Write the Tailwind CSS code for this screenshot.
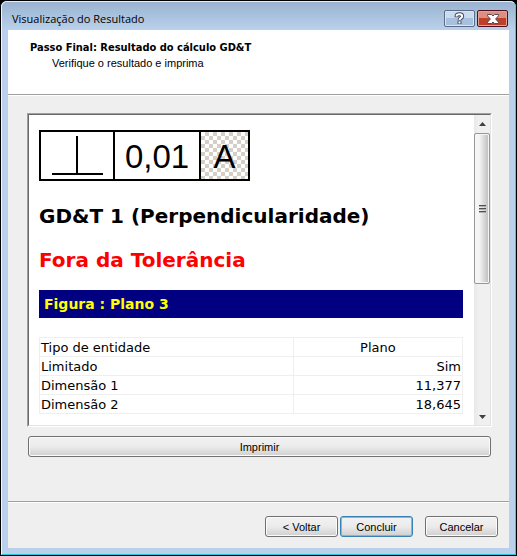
<!DOCTYPE html>
<html lang="pt-BR">
<head>
    <meta charset="UTF-8" />
    <meta name="viewport" content="width=device-width, initial-scale=1.0" />
    <title>Visualização do Resultado</title>
    <script src="https://cdn.jsdelivr.net/npm/@tailwindcss/browser@4"></script>
</head>
<body class="bg-black font-['Tahoma','Liberation_Sans',sans-serif] text-[11px] leading-[14px] text-black">

<!-- Moldura da janela -->
<div class="flex min-h-screen flex-col rounded-t-[7px] border border-black bg-[#b9d1ea]">
    <div class="flex flex-1 flex-col rounded-t-[6px] border-t border-r border-b border-l border-t-[#e4eef8] border-r-[#34cbe8] border-b-[#28c5dd] border-l-[#f2f7fc]">

        <!-- Barra de título -->
        <header class="flex h-7 items-center justify-between rounded-t-[5px] bg-linear-to-b from-[#9ab3d1] to-[#b9d1ea] pr-[7px] pl-[10px]">
            <h1 class="pt-[5px] font-['Segoe_UI','Open_Sans',sans-serif] text-[11px]">Visualização do Resultado</h1>
            <div class="flex gap-[2px] pt-[5px]">
                <button type="button" aria-label="Ajuda" class="flex h-[17px] w-[31px] items-center justify-center rounded-[2px] border border-[#5b6c84] bg-linear-to-b from-[#c9dbee] from-45% to-[#a6c0dd] to-50% shadow-[inset_0_0_0_1px_#d6e5f4]">
                    <svg class="h-[13px] w-[11px]" viewBox="0 0 11 13" fill="none">
                        <path d="M2.6 5.2V3.8C2.6 1.6 8.2 1.6 8.2 4.2C8.2 6.3 5.5 6 5.5 8.4M5.5 9.2V12" stroke="#434a5c" stroke-width="4" />
                        <path d="M2.6 4.6V3.8C2.6 1.8 8.2 1.8 8.2 4.2C8.2 6.3 5.5 6 5.5 8M5.5 9.4V11.4" stroke="#fff" stroke-width="2" />
                    </svg>
                </button>
                <button type="button" aria-label="Fechar" class="flex h-[17px] w-[31px] items-center justify-center rounded-[2px] border border-[#4e1022] bg-linear-to-b from-[#dd8f7f] from-45% to-[#bf4029] to-50% shadow-[inset_0_0_0_1px_#e5a191]">
                    <svg class="h-[10px] w-[12px]" viewBox="0 0 12 10">
                        <path d="M0.5 0.5H4.5L6 2L7.5 0.5H11.5V1.8L8.6 5L11.5 8.2V9.5H7.5L6 8L4.5 9.5H0.5V8.2L3.4 5L0.5 1.8Z" fill="#fff" stroke="#56495a" stroke-width="1" />
                    </svg>
                </button>
            </div>
        </header>

        <main class="mx-[6px] mb-[6px] flex flex-1 flex-col bg-[#efefef]">

            <!-- Cabeçalho do assistente -->
            <section class="h-[65px] border-b border-[#a0a0a0] bg-white pt-[11px] pl-[22px] shadow-[0_1px_0_#fff]">
                <h2 class="font-['Tahoma','DejaVu_Sans_Condensed','DejaVu_Sans',sans-serif] font-bold">Passo Final: Resultado do cálculo GD&amp;T</h2>
                <p class="pt-px pl-[22px]">Verifique o resultado e imprima</p>
            </section>

            <section class="flex flex-1 flex-col pt-[18px] pr-[17px] pb-11 pl-[19px]">

                <!-- Visualizador -->
                <div class="flex flex-1 border border-t-[#a0a0a0] border-r-white border-b-white border-l-[#a0a0a0]">
                    <div class="flex flex-1 border border-t-[#696969] border-r-[#e3e3e3] border-b-[#e3e3e3] border-l-[#696969] bg-white">
                        <article class="flex-1 pt-[15px] pr-[11px] pb-2 pl-[10px] font-['Verdana','DejaVu_Sans',sans-serif]">
                            <div class="flex h-[51px] w-fit divide-x-2 divide-black border-2 border-black font-['Liberation_Sans',sans-serif] text-[33px] leading-[49px]">
                                <div class="flex w-[74px] items-center justify-center">
                                    <svg class="h-[39px] w-[51px]" viewBox="0 0 51 39" role="img" aria-label="Perpendicularidade" shape-rendering="crispEdges">
                                        <path d="M24 0H26V37H51V39H0V37H24Z" fill="#000" />
                                    </svg>
                                </div>
                                <div class="w-[86px] text-center">0,01</div>
                                <div class="w-[47px] bg-[conic-gradient(#d4d0c8_25%,#fff_0_50%,#d4d0c8_0_75%,#fff_0)] bg-[length:8px_8px] text-center">A</div>
                            </div>

                            <h3 class="mt-[23px] text-[20px] leading-6 font-bold">GD&amp;T 1 (Perpendicularidade)</h3>
                            <h3 class="mt-5 text-[20px] leading-6 font-bold text-[#ff0000]">Fora da Tolerância</h3>
                            <h4 class="mt-[18px] bg-[#000080] px-[5px] text-[14px] leading-7 font-bold text-[#ffff00]">Figura : Plano 3</h4>

                            <table class="mt-[19px] w-full border-collapse text-[13px] leading-[17px] [&_td]:border [&_td]:border-[#efefef] [&_td]:px-px [&_td]:pt-px">
                                <tbody>
                                    <tr>
                                        <td class="w-3/5">Tipo de entidade</td>
                                        <td class="text-center">Plano</td>
                                    </tr>
                                    <tr>
                                        <td>Limitado</td>
                                        <td class="text-right">Sim</td>
                                    </tr>
                                    <tr>
                                        <td>Dimensão 1</td>
                                        <td class="text-right">11,377</td>
                                    </tr>
                                    <tr>
                                        <td>Dimensão 2</td>
                                        <td class="text-right">18,645</td>
                                    </tr>
                                </tbody>
                            </table>
                        </article>

                        <!-- Barra de rolagem -->
                        <div class="flex w-4 flex-col bg-linear-to-r from-[#e8e8e8] to-[#f0f0f0] to-30%">
                            <button type="button" aria-label="Rolar para cima" class="flex h-[18px] items-center justify-center">
                                <svg class="h-1 w-[7px]" viewBox="0 0 7 4"><path d="M3.5 0L7 4H0Z" fill="#404040" /></svg>
                            </button>
                            <div class="flex h-[151px] flex-col items-center justify-center gap-px rounded-[2px] border border-[#979797] bg-linear-to-r from-[#f5f5f5] from-30% to-[#c4c4c6] to-90% shadow-[inset_0_0_0_1px_#f5f5f5]">
                                <span class="h-[2px] w-[7px] border-t border-[#505050] bg-[#b0b0b0]"></span>
                                <span class="h-[2px] w-[7px] border-t border-[#505050] bg-[#b0b0b0]"></span>
                                <span class="h-[2px] w-[7px] border-t border-[#505050] bg-[#b0b0b0]"></span>
                            </div>
                            <button type="button" aria-label="Rolar para baixo" class="mt-auto flex h-[17px] items-center justify-center">
                                <svg class="h-1 w-[7px]" viewBox="0 0 7 4"><path d="M0 0H7L3.5 4Z" fill="#404040" /></svg>
                            </button>
                        </div>
                    </div>
                </div>

                <button type="button" class="mt-[9px] mr-px ml-px h-[21px] rounded-[3px] border border-[#707070] bg-linear-to-b from-[#f2f2f2] via-[#ebebeb] via-50% to-[#cfcfcf] pt-px shadow-[inset_0_0_0_1px_#fbfbfb]">Imprimir</button>
            </section>

            <!-- Navegação -->
            <footer class="flex justify-end border-t border-[#a0a0a0] pt-[14px] pr-[11px] pb-[11px] shadow-[inset_0_1px_0_#fff]">
                <button type="button" class="h-[21px] w-[73px] rounded-[3px] border border-[#707070] bg-linear-to-b from-[#f2f2f2] via-[#ebebeb] via-50% to-[#cfcfcf] pt-px shadow-[inset_0_0_0_1px_#fbfbfb]">&lt; Voltar</button>
                <button type="button" class="ml-[2px] h-[21px] w-[73px] rounded-[3px] border border-[#3c7fb1] bg-linear-to-b from-[#f2f2f2] via-[#ebebeb] via-50% to-[#cfcfcf] pt-px shadow-[inset_0_0_0_1px_#48d0f5]">Concluir</button>
                <button type="button" class="ml-3 h-[21px] w-[73px] rounded-[3px] border border-[#707070] bg-linear-to-b from-[#f2f2f2] via-[#ebebeb] via-50% to-[#cfcfcf] pt-px shadow-[inset_0_0_0_1px_#fbfbfb]">Cancelar</button>
            </footer>
        </main>
    </div>
</div>

</body>
</html>
